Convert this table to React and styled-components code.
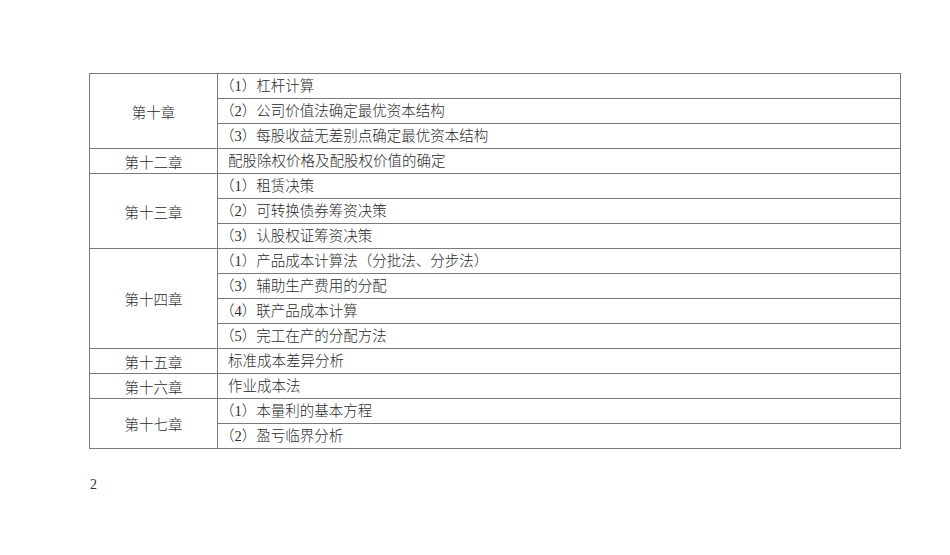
import React from "react";
import styled, { createGlobalStyle } from "styled-components";

const GlobalStyle = createGlobalStyle`
  html, body {
    margin: 0;
    padding: 0;
    background: #ffffff;
  }
  body {
    font-family: "Liberation Serif", "Noto Sans CJK SC", serif;
    color: #2b2b2b;
  }
`;

const chapters = [
  {
    name: "第十章",
    items: ["（1）杠杆计算", "（2）公司价值法确定最优资本结构", "（3）每股收益无差别点确定最优资本结构"],
  },
  { name: "第十二章", items: ["配股除权价格及配股权价值的确定"] },
  {
    name: "第十三章",
    items: ["（1）租赁决策", "（2）可转换债券筹资决策", "（3）认股权证筹资决策"],
  },
  {
    name: "第十四章",
    items: [
      "（1）产品成本计算法（分批法、分步法）",
      "（3）辅助生产费用的分配",
      "（4）联产品成本计算",
      "（5）完工在产的分配方法",
    ],
  },
  { name: "第十五章", items: ["标准成本差异分析"] },
  { name: "第十六章", items: ["作业成本法"] },
  { name: "第十七章", items: ["（1）本量利的基本方程", "（2）盈亏临界分析"] },
];

const Page = styled.div`
  width: 950px;
  height: 555px;
  padding: 73px 0 0 89px;
  box-sizing: border-box;
`;

const Table = styled.table`
  width: 812px;
  border-collapse: collapse;
  table-layout: fixed;
  font-size: 14.5px;
  font-weight: 300;
`;

const ChapterCell = styled.td`
  width: 127px;
  border: 1px solid #7a7a7a;
  text-align: center;
  vertical-align: middle;
  padding: 0;
`;

const ItemCell = styled.td`
  border: 1px solid #7a7a7a;
  height: 24px;
  padding: 0 0 0 ${(p) => (p.$paren ? 2 : 10)}px;
  line-height: 24px;
  white-space: nowrap;
`;

const PageNumber = styled.div`
  margin-top: 28px;
  margin-left: 1px;
  font-size: 14px;
  font-family: "Liberation Serif", serif;
  color: #333;
`;

export default function App() {
  return (
    <>
      <GlobalStyle />
      <Page>
        <Table>
          <tbody>
            {chapters.map((ch) =>
              ch.items.map((item, i) => (
                <tr key={ch.name + i}>
                  {i === 0 && <ChapterCell rowSpan={ch.items.length}>{ch.name}</ChapterCell>}
                  <ItemCell $paren={item.startsWith("（")}>{item}</ItemCell>
                </tr>
              ))
            )}
          </tbody>
        </Table>
        <PageNumber>2</PageNumber>
      </Page>
    </>
  );
}
